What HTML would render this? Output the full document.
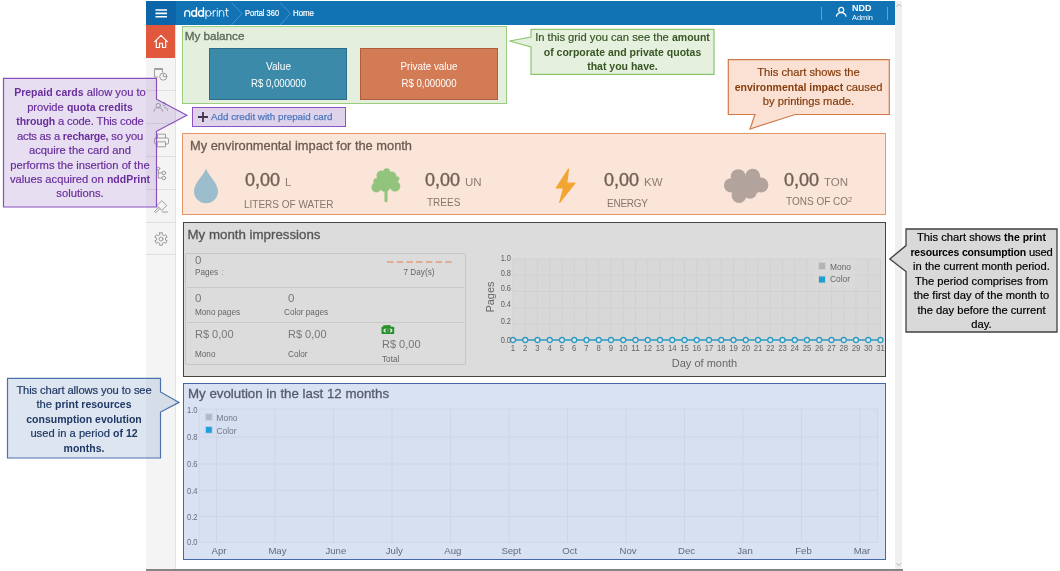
<!DOCTYPE html>
<html>
<head>
<meta charset="utf-8">
<title>nddPrint Portal 360 - Home</title>
<style>
*{box-sizing:border-box;margin:0;padding:0}
html,body{width:1060px;height:571px;overflow:hidden;background:#fff;font-family:"Liberation Sans",sans-serif;}
.a{position:absolute;}
.t{position:absolute;white-space:nowrap;line-height:1;}
#topbar{left:146px;top:1px;width:748.500px;height:24px;background:#1172b4;}
#burger{left:146px;top:1px;width:30px;height:24px;background:#0c65a8;}
#side{left:146px;top:25px;width:30px;height:544px;background:#f4f4f4;border-right:1.400px solid #e2e2e2;}
#home{left:146px;top:25px;width:29.200px;height:32.800px;background:#e2583d;}
.sep{position:absolute;left:146px;width:30px;height:1px;background:#dedede;}
#scroll{left:895px;top:1px;width:7px;height:568px;background:#f0f0f0;}
#botline{left:146px;top:569px;width:756.500px;height:2px;background:#858585;}
#bal{left:182px;top:26px;width:324.500px;height:78px;background:#e5efdd;border:1.400px solid #9bcd7e;}
#bx1{left:209.200px;top:48px;width:138px;height:52.200px;background:#3b8aa9;border:1.200px solid #2b6c88;}
#bx2{left:359.800px;top:48px;width:138px;height:52.200px;background:#d27b55;border:1.200px solid #ad5f3d;}
#addc{left:192px;top:107px;width:154px;height:19.500px;background:#dfd3ec;border:1.400px solid #8f52c2;}
#env{left:182px;top:133px;width:704px;height:81.500px;background:#fbe4d8;border:1.400px solid #e2966b;}
#imp{left:183px;top:222px;width:703.100px;height:154.500px;background:#dcdcdc;border:1.500px solid #454545;}
#tbl{left:185px;top:253px;width:281px;height:112px;border:1px solid #c6c6c6;border-radius:2px;}
#evo{left:183px;top:383px;width:703.300px;height:177px;background:#d9e2f3;border:1.400px solid #4469a6;}
.w{color:#fff}
.c{text-align:center}
.call{position:absolute;text-align:center;}
.call{-webkit-text-stroke:.2px}
.call b{font-size:10.500px;-webkit-text-stroke:0}
</style>
</head>
<body>
<div id="root" class="a" style="left:0;top:0;width:1060px;height:571px;will-change:transform">
<!-- app chrome -->
<div class="a" id="side"></div>
<div class="a" id="scroll"></div>
<div class="a" id="topbar"></div>
<div class="a" id="burger"></div>
<div class="a" id="home"></div>
<div class="a" id="botline"></div>
<!-- top bar content -->
<svg class="a" style="left:146px;top:1px" width="748" height="24" viewBox="0 0 748 24">
  <g stroke="#fff" stroke-width="1.6" stroke-linecap="butt"><path d="M9.5 9h11.500M9.5 12.400h11.500M9.5 15.800h11.500"/></g>
  <g fill="none" stroke="#4a95cc" stroke-width="1"><path d="M85.500 1.500l10.500 11-10.500 11.500"/><path d="M134 1.500l10.500 11-10.500 11.500"/></g>
  <g stroke="#5fa3d3" stroke-width="1"><path d="M675.500 6v13M741.500 6v13"/></g>
  <g fill="none" stroke="#fff" stroke-width="1.2"><circle cx="695.200" cy="8.900" r="2.500"/><path d="M690.300 15.700c.5-2.900 2.400-4.100 4.900-4.100s4.400 1.200 4.900 4.100"/></g>
</svg>
<svg class="a" style="left:146px;top:1px" width="120" height="24" viewBox="0 0 120 24" fill="none" stroke="#fff" stroke-linecap="round" stroke-linejoin="round">
  <g stroke-width="1.350">
    <path d="M38.800 15.200V12.100a2.450 2.450 0 0 1 4.900 0V15.200"/>
    <ellipse cx="48.100" cy="12.400" rx="2.450" ry="2.800"/><path d="M50.550 6.700V15.200"/>
    <ellipse cx="55" cy="12.400" rx="2.450" ry="2.800"/><path d="M57.450 6.700V15.200"/>
  </g>
  <g stroke-width=".9">
    <ellipse cx="62.500" cy="12.400" rx="2.600" ry="2.850"/><path d="M59.900 9.500V17.800"/>
    <path d="M67.200 9.500V15.300M67.200 11.600c.2-1.400 1.100-2.100 2.500-2"/>
    <path d="M71.300 9.600V15.300M71.300 7.300v.2"/>
    <path d="M73.400 9.500V15.300M73.400 12c0-1.500 1-2.450 2.200-2.450s2.200.95 2.200 2.450V15.300"/>
    <path d="M80.600 7.400V13.900c0 1 .5 1.400 1.500 1.400M79.300 9.600h3"/>
  </g>
</svg>
<div class="t w" style="left:245px;top:9.300px;font-size:8.700px;transform:scaleX(.86);transform-origin:0 0;-webkit-text-stroke:.2px #fff">Portal 360</div>
<div class="t w" style="left:293px;top:9.300px;font-size:8.700px;transform:scaleX(.905);transform-origin:0 0;-webkit-text-stroke:.2px #fff">Home</div>
<div class="t w" style="left:852px;top:4px;font-size:9px;font-weight:bold">NDD</div>
<div class="t w" style="left:852px;top:14px;font-size:7.400px">Admin</div>

<!-- sidebar -->
<div class="sep" style="top:90px"></div><div class="sep" style="top:123px"></div><div class="sep" style="top:156px"></div><div class="sep" style="top:189px"></div><div class="sep" style="top:222px"></div><div class="sep" style="top:254px"></div>
<svg class="a" style="left:146px;top:25px" width="30" height="240" viewBox="0 0 30 240" fill="none" stroke="#9c9c9c" stroke-width="1" stroke-linejoin="round" stroke-linecap="round">
  <path d="M8.700 16.600L15 10.400l6.300 6.200M10.300 15.200v7.300h3.200v-4.300h3v4.300h3.200V15.200" stroke="#fff" stroke-width="1.150"/>
  <path d="M11.500 52h-3V43.500h8v3.500M8.500 44.400h8" /><circle cx="17.300" cy="51.600" r="3.600"/><path d="M17.300 49.300v2.300h2.200"/>
  <circle cx="12.300" cy="80.500" r="2.200"/><path d="M8 86.200c.3-2.600 2-3.600 4.300-3.600s4 1 4.300 3.600"/><path d="M17.200 80.300a1.600 1.600 0 1 0 0-2.600M18.500 82.400c1.900 0 2.900 1.100 3 2.900"/>
  <path d="M11.500 113v-3.800h8V113"/><rect x="8.500" y="113" width="14" height="6" rx="1.200"/><rect x="11.500" y="116.800" width="8" height="5" fill="#f4f4f4"/>
  <circle cx="12.300" cy="143.600" r="1.500"/><circle cx="17.800" cy="147.900" r="1.800"/><circle cx="17.800" cy="153" r="1.800"/><path d="M12.300 145.100V153H16M12.300 147.900H16"/>
  <path d="M11.200 180.300l4.600-4.700 4.900 4.900-4.600 4.700zM12.700 182.300l-4.200 4.200 1.300 1.300 4.200-4.200M16.200 187h5.300"/>
  <circle cx="15" cy="214" r="2"/><path d="M13.48 207.78L16.52 207.78L16.24 209.57L18.21 210.71L19.62 209.57L21.14 212.21L19.46 212.86L19.46 215.14L21.14 215.79L19.62 218.43L18.21 217.29L16.24 218.43L16.52 220.22L13.48 220.22L13.76 218.43L11.79 217.29L10.38 218.43L8.86 215.79L10.54 215.14L10.54 212.86L8.86 212.21L10.38 209.57L11.79 210.71L13.76 209.57Z"/>
</svg>
<svg class="a" style="left:894px;top:0px" width="9" height="571" viewBox="0 0 9 571" fill="none" stroke="#b0b0b0" stroke-width="1"><path d="M2.500 6.500l2.300-2.300 2.300 2.300M2.500 563.200l2.300 2.300 2.300-2.300"/></svg>


<!-- balance -->
<div class="a" id="bal"></div>
<div class="a" id="bx1"></div>
<div class="a" id="bx2"></div>
<div class="a" id="addc"></div>
<div class="t" style="left:184.700px;top:30px;font-size:11.700px;color:#5d6b5a;-webkit-text-stroke:.35px #5d6b5a">My balance</div>
<div class="t w c" style="left:210px;width:137px;top:60.500px;font-size:11.200px;transform:scaleX(.9)">Value</div>
<div class="t w c" style="left:210px;width:137px;top:77.800px;font-size:11.200px;transform:scaleX(.86)">R$ 0,000000</div>
<div class="t w c" style="left:360px;width:138px;top:60.500px;font-size:11.200px;transform:scaleX(.88)">Private value</div>
<div class="t w c" style="left:360px;width:138px;top:77.800px;font-size:11.200px;transform:scaleX(.86)">R$ 0,000000</div>
<svg class="a" style="left:197px;top:111px" width="12" height="12" viewBox="0 0 12 12"><path d="M1 6h10M6 1v10" stroke="#43364f" stroke-width="1.800" fill="none"/></svg>
<div class="t" style="left:211px;top:112px;font-size:9.800px;color:#4f78bd;-webkit-text-stroke:.25px #4f78bd">Add credit with prepaid card</div>


<!-- environment -->
<div class="a" id="env"></div>
<div class="t" style="left:190px;top:140px;font-size:12.850px;color:#6b5c53;-webkit-text-stroke:.3px #6b5c53">My environmental impact for the month</div>
<svg class="a" style="left:182px;top:133px" width="704" height="81" viewBox="0 0 704 81">
  <path d="M24 35.800c2.500 6.800 12 14.300 12 22.500a12 12 0 0 1-24 0c0-8.200 9.500-15.700 12-22.500z" fill="#9cbdcb"/>
  <g fill="#93c47d"><rect x="202.500" y="54" width="3" height="15.300" rx="1.500"/><circle cx="204.700" cy="38.600" r="3.300"/><circle cx="204.300" cy="47" r="8.700"/><circle cx="194.300" cy="54.500" r="4.900"/><circle cx="195.200" cy="49" r="3.900"/><circle cx="213" cy="53.300" r="5.300"/><circle cx="215.200" cy="45.800" r="2.300"/><circle cx="203" cy="53.300" r="5.500"/><circle cx="199.500" cy="42.500" r="5"/><circle cx="209.500" cy="43.500" r="5"/><circle cx="211" cy="48.500" r="5"/><circle cx="198" cy="50" r="5"/></g>
  <path d="M386.500 36.200L374.200 55h7.400l-3.900 14.500 15.200-19.300h-8.200z" fill="#f3a533" stroke="#f3a533" stroke-width="1.200" stroke-linejoin="round"/>
  <g fill="#b2a49c"><circle cx="556.200" cy="43.600" r="7.400"/><circle cx="570.700" cy="43.200" r="7.500"/><circle cx="549.200" cy="52.400" r="7.200"/><circle cx="579" cy="52" r="7.400"/><circle cx="557" cy="62.500" r="7.400"/><circle cx="568" cy="59" r="6.800"/><rect x="552" y="44" width="24" height="16"/></g>
</svg>
<div class="t" style="left:245px;top:171px;font-size:18px;color:#6f5e54;-webkit-text-stroke:.35px #6f5e54">0,00 <span style="font-size:11.500px;color:#8c7d74;-webkit-text-stroke:0">L</span></div>
<div class="t" style="left:244px;top:200px;font-size:10px;color:#85766d">LITERS OF WATER</div>
<div class="t" style="left:425px;top:171px;font-size:18px;color:#6f5e54;-webkit-text-stroke:.35px #6f5e54">0,00 <span style="font-size:11.500px;color:#8c7d74;-webkit-text-stroke:0">UN</span></div>
<div class="t" style="left:427px;top:198px;font-size:10px;color:#85766d">TREES</div>
<div class="t" style="left:604px;top:171px;font-size:18px;color:#6f5e54;-webkit-text-stroke:.35px #6f5e54">0,00 <span style="font-size:11.500px;color:#8c7d74;-webkit-text-stroke:0">KW</span></div>
<div class="t" style="left:607px;top:199px;font-size:10px;letter-spacing:-.25px;color:#85766d">ENERGY</div>
<div class="t" style="left:784px;top:171px;font-size:18px;color:#6f5e54;-webkit-text-stroke:.35px #6f5e54">0,00 <span style="font-size:11.500px;color:#8c7d74;-webkit-text-stroke:0">TON</span></div>
<div class="t" style="left:786px;top:197px;font-size:10px;color:#85766d">TONS OF CO<span style="font-size:7.500px;position:relative;top:-3.200px">2</span></div>


<!-- impressions -->
<div class="a" id="imp"></div>
<div class="a" id="tbl"></div>
<div class="t" style="left:187.500px;top:228px;font-size:13.300px;color:#555;-webkit-text-stroke:.3px #555">My month impressions</div>
<div class="a" style="left:187px;top:287px;width:277px;height:1px;background:#c9c9c9"></div>
<div class="a" style="left:187px;top:322px;width:277px;height:1px;background:#c9c9c9"></div>
<div class="t" style="left:195px;top:254.700px;font-size:11.500px;color:#777">0</div>
<div class="t" style="left:195px;top:268.000px;font-size:8.800px;transform:scaleX(.93);transform-origin:0 50%;color:#666">Pages <span style="color:#999;margin-left:1px">:</span></div>
<svg class="a" style="left:387px;top:259px" width="66" height="6"><path d="M0 3H65" stroke="#e19d7b" stroke-width="1.500" stroke-dasharray="6.500 3.200"/></svg>
<div class="t c" style="left:387px;width:64px;top:268.000px;font-size:8.800px;transform:scaleX(.93);color:#666">7 Day(s)</div>
<div class="t" style="left:195px;top:292.500px;font-size:11.500px;color:#777">0</div>
<div class="t" style="left:195px;top:308.000px;font-size:8.800px;transform:scaleX(.93);transform-origin:0 50%;color:#666">Mono pages</div>
<div class="t" style="left:288px;top:292.500px;font-size:11.500px;color:#777">0</div>
<div class="t" style="left:284px;top:308.000px;font-size:8.800px;transform:scaleX(.93);transform-origin:0 50%;color:#666">Color pages</div>
<div class="t" style="left:195px;top:328.500px;font-size:11px;color:#777">R$ 0,00</div>
<div class="t" style="left:195px;top:350.000px;font-size:8.800px;transform:scaleX(.93);transform-origin:0 50%;color:#666">Mono</div>
<div class="t" style="left:288px;top:328.500px;font-size:11px;color:#777">R$ 0,00</div>
<div class="t" style="left:288px;top:350.000px;font-size:8.800px;transform:scaleX(.93);transform-origin:0 50%;color:#666">Color</div>
<svg class="a" style="left:381px;top:324px" width="14" height="11" viewBox="0 0 14 11"><path d="M2 3.200L2.400 1.300L9.200 1L10.200 3.200z" fill="#2f962f"/><rect x=".5" y="2.800" width="12.700" height="7.200" rx=".8" fill="#26902a"/><ellipse cx="6.900" cy="6.400" rx="4.500" ry="2.200" fill="#d9ead9"/><ellipse cx="6.900" cy="6.400" rx="2.500" ry="2.500" fill="#1f8a23"/><rect x="6.500" y="5" width=".8" height="2.800" fill="#a9d3a9"/></svg>
<div class="t" style="left:382px;top:339px;font-size:11px;color:#777">R$ 0,00</div>
<div class="t" style="left:382px;top:354.500px;font-size:8.800px;transform:scaleX(.93);transform-origin:0 50%;color:#666">Total</div>
<svg class="a" style="left:0;top:0" width="1060" height="571" viewBox="0 0 1060 571" font-family="Liberation Sans, sans-serif">
  <rect x="513.0" y="259" width="367.5" height="81" fill="#d8d8d8"/>
  <path d="M513.00 259V340M525.25 259V340M537.50 259V340M549.75 259V340M562.00 259V340M574.25 259V340M586.50 259V340M598.75 259V340M611.00 259V340M623.25 259V340M635.50 259V340M647.75 259V340M660.00 259V340M672.25 259V340M684.50 259V340M696.75 259V340M709.00 259V340M721.25 259V340M733.50 259V340M745.75 259V340M758.00 259V340M770.25 259V340M782.50 259V340M794.75 259V340M807.00 259V340M819.25 259V340M831.50 259V340M843.75 259V340M856.00 259V340M868.25 259V340M880.50 259V340M513.0 259H880.5M513.0 275.2H880.5M513.0 291.4H880.5M513.0 307.6H880.5M513.0 323.8H880.5M513.0 340H880.5" stroke="#d1d1d1" stroke-width="1" fill="none"/>
  <rect x="815" y="259" width="42" height="28" fill="#dcdcdc" opacity=".5"/>
  <rect x="818.500" y="262.500" width="7" height="7" fill="#b4b4b4" stroke="#cfcfcf" stroke-width="1"/>
  <rect x="818.500" y="276" width="7" height="7" fill="#1f9fcf" stroke="#cfcfcf" stroke-width="1"/>
  <g font-size="8.400" fill="#686868"><text x="830" y="269.500">Mono</text><text x="830" y="282.300">Color</text></g>
  <path d="M513.0 340H880.5" stroke="#2d9cc4" stroke-width="1.500"/>
  <g fill="#e4e4e4" stroke="#2d9cc4" stroke-width="1.300"><circle cx="513.00" cy="340" r="2.500"/><circle cx="525.25" cy="340" r="2.500"/><circle cx="537.50" cy="340" r="2.500"/><circle cx="549.75" cy="340" r="2.500"/><circle cx="562.00" cy="340" r="2.500"/><circle cx="574.25" cy="340" r="2.500"/><circle cx="586.50" cy="340" r="2.500"/><circle cx="598.75" cy="340" r="2.500"/><circle cx="611.00" cy="340" r="2.500"/><circle cx="623.25" cy="340" r="2.500"/><circle cx="635.50" cy="340" r="2.500"/><circle cx="647.75" cy="340" r="2.500"/><circle cx="660.00" cy="340" r="2.500"/><circle cx="672.25" cy="340" r="2.500"/><circle cx="684.50" cy="340" r="2.500"/><circle cx="696.75" cy="340" r="2.500"/><circle cx="709.00" cy="340" r="2.500"/><circle cx="721.25" cy="340" r="2.500"/><circle cx="733.50" cy="340" r="2.500"/><circle cx="745.75" cy="340" r="2.500"/><circle cx="758.00" cy="340" r="2.500"/><circle cx="770.25" cy="340" r="2.500"/><circle cx="782.50" cy="340" r="2.500"/><circle cx="794.75" cy="340" r="2.500"/><circle cx="807.00" cy="340" r="2.500"/><circle cx="819.25" cy="340" r="2.500"/><circle cx="831.50" cy="340" r="2.500"/><circle cx="843.75" cy="340" r="2.500"/><circle cx="856.00" cy="340" r="2.500"/><circle cx="868.25" cy="340" r="2.500"/><circle cx="880.50" cy="340" r="2.500"/></g>
  <g font-size="8.700" fill="#666" text-anchor="middle"><text x="513.00" y="351.300" textLength="4.3" lengthAdjust="spacingAndGlyphs">1</text><text x="525.25" y="351.300" textLength="4.3" lengthAdjust="spacingAndGlyphs">2</text><text x="537.50" y="351.300" textLength="4.3" lengthAdjust="spacingAndGlyphs">3</text><text x="549.75" y="351.300" textLength="4.3" lengthAdjust="spacingAndGlyphs">4</text><text x="562.00" y="351.300" textLength="4.3" lengthAdjust="spacingAndGlyphs">5</text><text x="574.25" y="351.300" textLength="4.3" lengthAdjust="spacingAndGlyphs">6</text><text x="586.50" y="351.300" textLength="4.3" lengthAdjust="spacingAndGlyphs">7</text><text x="598.75" y="351.300" textLength="4.3" lengthAdjust="spacingAndGlyphs">8</text><text x="611.00" y="351.300" textLength="4.3" lengthAdjust="spacingAndGlyphs">9</text><text x="623.25" y="351.300" textLength="8.6" lengthAdjust="spacingAndGlyphs">10</text><text x="635.50" y="351.300" textLength="8.6" lengthAdjust="spacingAndGlyphs">11</text><text x="647.75" y="351.300" textLength="8.6" lengthAdjust="spacingAndGlyphs">12</text><text x="660.00" y="351.300" textLength="8.6" lengthAdjust="spacingAndGlyphs">13</text><text x="672.25" y="351.300" textLength="8.6" lengthAdjust="spacingAndGlyphs">14</text><text x="684.50" y="351.300" textLength="8.6" lengthAdjust="spacingAndGlyphs">15</text><text x="696.75" y="351.300" textLength="8.6" lengthAdjust="spacingAndGlyphs">16</text><text x="709.00" y="351.300" textLength="8.6" lengthAdjust="spacingAndGlyphs">17</text><text x="721.25" y="351.300" textLength="8.6" lengthAdjust="spacingAndGlyphs">18</text><text x="733.50" y="351.300" textLength="8.6" lengthAdjust="spacingAndGlyphs">19</text><text x="745.75" y="351.300" textLength="8.6" lengthAdjust="spacingAndGlyphs">20</text><text x="758.00" y="351.300" textLength="8.6" lengthAdjust="spacingAndGlyphs">21</text><text x="770.25" y="351.300" textLength="8.6" lengthAdjust="spacingAndGlyphs">22</text><text x="782.50" y="351.300" textLength="8.6" lengthAdjust="spacingAndGlyphs">23</text><text x="794.75" y="351.300" textLength="8.6" lengthAdjust="spacingAndGlyphs">24</text><text x="807.00" y="351.300" textLength="8.6" lengthAdjust="spacingAndGlyphs">25</text><text x="819.25" y="351.300" textLength="8.6" lengthAdjust="spacingAndGlyphs">26</text><text x="831.50" y="351.300" textLength="8.6" lengthAdjust="spacingAndGlyphs">27</text><text x="843.75" y="351.300" textLength="8.6" lengthAdjust="spacingAndGlyphs">28</text><text x="856.00" y="351.300" textLength="8.6" lengthAdjust="spacingAndGlyphs">29</text><text x="868.25" y="351.300" textLength="8.6" lengthAdjust="spacingAndGlyphs">30</text><text x="880.50" y="351.300" textLength="8.6" lengthAdjust="spacingAndGlyphs">31</text></g>
  <g font-size="8.700" fill="#5e5e5e" text-anchor="end"><text x="511" y="261.3" textLength="10.300" lengthAdjust="spacingAndGlyphs">1.0</text><text x="511" y="275.8" textLength="10.300" lengthAdjust="spacingAndGlyphs">0.8</text><text x="511" y="290.8" textLength="10.300" lengthAdjust="spacingAndGlyphs">0.6</text><text x="511" y="307.3" textLength="10.300" lengthAdjust="spacingAndGlyphs">0.4</text><text x="511" y="323.8" textLength="10.300" lengthAdjust="spacingAndGlyphs">0.2</text><text x="511" y="342.8" textLength="10.300" lengthAdjust="spacingAndGlyphs">0.0</text></g>
  <text x="704.500" y="367" font-size="11" fill="#666" text-anchor="middle">Day of month</text>
  <text transform="translate(494,297) rotate(-90)" font-size="11" fill="#666" text-anchor="middle">Pages</text>
</svg>


<!-- evolution -->
<div class="a" id="evo"></div>
<div class="t" style="left:188px;top:386.500px;font-size:13.300px;color:#555c6b;-webkit-text-stroke:.3px #555c6b">My evolution in the last 12 months</div>
<svg class="a" style="left:0;top:0" width="1060" height="571" viewBox="0 0 1060 571" font-family="Liberation Sans, sans-serif">
  <rect x="199.0" y="409.0" width="678.5" height="133.5" fill="#d7e0f1" stroke="#ced7e9" stroke-width="1"/>
  <path d="M216.50 409.0V542.5M275.00 409.0V542.5M333.50 409.0V542.5M392.00 409.0V542.5M450.50 409.0V542.5M509.00 409.0V542.5M567.50 409.0V542.5M626.00 409.0V542.5M684.50 409.0V542.5M743.00 409.0V542.5M801.50 409.0V542.5M860.00 409.0V542.5M199.0 437H877.5M199.0 464H877.5M199.0 490.4H877.5M199.0 516.5H877.5" stroke="#cdd6e8" stroke-width="1" fill="none"/>
  <rect x="205.300" y="413.600" width="7" height="7" fill="#b2b9c6" stroke="#ccd4e4" stroke-width="1"/>
  <rect x="205.300" y="426.300" width="7" height="7" fill="#1f9fdc" stroke="#ccd4e4" stroke-width="1"/>
  <g font-size="8.400" fill="#707888"><text x="216.500" y="421">Mono</text><text x="216.500" y="434">Color</text></g>
  <g font-size="9.600" fill="#626b7e" text-anchor="middle" transform="translate(0,-1)"><text x="219.00" y="555">Apr</text><text x="277.45" y="555">May</text><text x="335.90" y="555">June</text><text x="394.35" y="555">July</text><text x="452.80" y="555">Aug</text><text x="511.25" y="555">Sept</text><text x="569.70" y="555">Oct</text><text x="628.15" y="555">Nov</text><text x="686.60" y="555">Dec</text><text x="745.05" y="555">Jan</text><text x="803.50" y="555">Feb</text><text x="861.95" y="555">Mar</text></g>
  <g font-size="8.700" fill="#646d80"><text x="187" y="413.3" textLength="10.500" lengthAdjust="spacingAndGlyphs">1.0</text><text x="187" y="440.3" textLength="10.500" lengthAdjust="spacingAndGlyphs">0.8</text><text x="187" y="467.3" textLength="10.500" lengthAdjust="spacingAndGlyphs">0.6</text><text x="187" y="493.7" textLength="10.500" lengthAdjust="spacingAndGlyphs">0.4</text><text x="187" y="519.8" textLength="10.500" lengthAdjust="spacingAndGlyphs">0.2</text><text x="187" y="545.3" textLength="10.500" lengthAdjust="spacingAndGlyphs">0.0</text></g>
</svg>



<!-- callouts -->
<svg class="a" style="left:0;top:0" width="1060" height="571" viewBox="0 0 1060 571" stroke-linejoin="miter">
  <path d="M3.500 78.300H156.500V99.200L186.800 115.300L156.500 131.300V207H3.500Z" fill="rgba(166,138,203,.27)" stroke="#8a4fbd" stroke-width="1.200"/>
  <path d="M7.500 378.300H160.500V391.900L179 402.400L160.500 412V458H7.500Z" fill="rgba(128,160,205,.27)" stroke="#4a73ab" stroke-width="1.200"/>
  <path d="M531 29.300H714V74.300H531V47L509.500 41L531 37Z" fill="#e6f0df" stroke="#8cc66e" stroke-width="1.200"/>
  <path d="M728.300 59.700H889.300V114.500H795L750 129L755 114.500H728.300Z" fill="#fbe1d3" stroke="#d17a4b" stroke-width="1.200"/>
  <path d="M906 229H1057V332H906V271.500L889.800 259L906 245.600Z" fill="#d9d9d9" stroke="#404040" stroke-width="1.300"/>
</svg>
<div class="call" style="left:3px;width:154px;top:85.300px;font-size:11.200px;line-height:14.460px;color:#6a2e9c;white-space:nowrap"><b>Prepaid cards</b> allow you to<br>provide <b>quota credits</b><br><span style="letter-spacing:-.14px"><b>through</b> a code. This code</span><br><span style="letter-spacing:-.2px">acts as a <b>recharge,</b> so you</span><br>acquire the card and<br>performs the insertion of the<br>values acquired on <b>nddPrint</b><br>solutions.</div>
<div class="call" style="left:7px;width:154px;top:382.500px;font-size:11.200px;line-height:14.500px;color:#1f3864;white-space:nowrap"><span style="letter-spacing:-.1px">This chart allows you to see</span><br>the <b>print resources</b><br><b>consumption evolution</b><br>used in a period <b>of 12</b><br><b>months.</b></div>
<div class="call" style="left:531px;width:183px;top:30.300px;font-size:11.200px;line-height:14.400px;color:#375623;white-space:nowrap">In this grid you can see the <b>amount</b><br><b>of corporate and private quotas</b><br><b>that you have.</b></div>
<div class="call" style="left:728px;width:161px;top:65.300px;font-size:11.200px;line-height:14.400px;color:#843c0c;white-space:nowrap">This chart shows the<br><b>environmental impact</b> caused<br>by printings made.</div>
<div class="call" style="left:906px;width:151px;top:230.100px;font-size:11.200px;line-height:14.500px;color:#000;white-space:nowrap">This chart shows <b>the print</b><br><span style="letter-spacing:-.16px"><b>resources consumption</b> used</span><br>in the current month period.<br>The period comprises from<br>the first day of the month to<br>the day before the current<br>day.</div>
</div>
</body>
</html>
